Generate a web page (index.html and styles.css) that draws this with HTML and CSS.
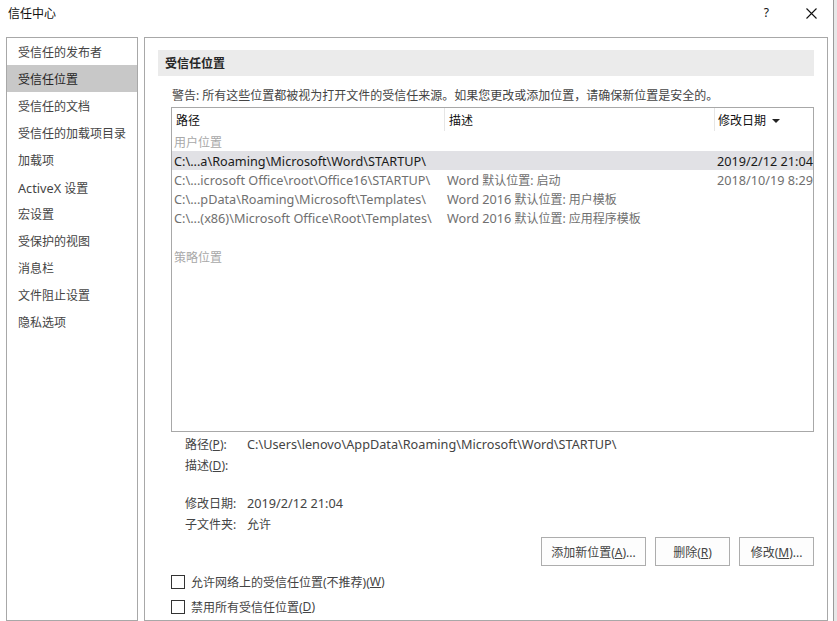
FILE: index.html
```html
<!DOCTYPE html>
<html lang="zh-CN">
  <head>
    <meta charset="UTF-8" />
    <title>信任中心</title>
    <link rel="stylesheet" href="styles.css">
  </head>
  <body>
    <div class="window">
      <header class="titlebar">
        <span class="title">信任中心</span>
        <div class="title-buttons">
          <span class="help">?</span>
          <svg class="close" width="11" height="11" viewBox="0 0 11 11">
            <path d="M0.5 0.5 L10.5 10.5 M10.5 0.5 L0.5 10.5" stroke="#111" stroke-width="1.1" fill="none" />
          </svg>
        </div>
      </header>

      <div class="content">
        <ul class="sidebar">
          <li>受信任的发布者</li>
          <li class="active">受信任位置</li>
          <li>受信任的文档</li>
          <li>受信任的加载项目录</li>
          <li>加载项</li>
          <li><span class="latin">ActiveX</span> 设置</li>
          <li>宏设置</li>
          <li>受保护的视图</li>
          <li>消息栏</li>
          <li>文件阻止设置</li>
          <li>隐私选项</li>
        </ul>

        <div class="panel">
          <div class="section-title">受信任位置</div>
          <p class="warning">警告: 所有这些位置都被视为打开文件的受信任来源。如果您更改或添加位置，请确保新位置是安全的。</p>

          <div class="table">
            <div class="table-head">
              <div class="col col-path">路径</div>
              <div class="col col-desc">描述</div>
              <div class="col col-date">修改日期 <span class="sort-arrow"></span></div>
            </div>
            <div class="group">用户位置</div>
            <div class="row selected">
              <div class="col col-path latin">C:\...a\Roaming\Microsoft\Word\STARTUP\</div>
              <div class="col col-desc"></div>
              <div class="col col-date latin">2019/2/12 21:04</div>
            </div>
            <div class="row">
              <div class="col col-path latin">C:\...icrosoft Office\root\Office16\STARTUP\</div>
              <div class="col col-desc"><span class="latin">Word</span> 默认位置: 启动</div>
              <div class="col col-date latin">2018/10/19 8:29</div>
            </div>
            <div class="row">
              <div class="col col-path latin">C:\...pData\Roaming\Microsoft\Templates\</div>
              <div class="col col-desc"><span class="latin">Word 2016</span> 默认位置: 用户模板</div>
              <div class="col col-date"></div>
            </div>
            <div class="row">
              <div class="col col-path latin">C:\...(x86)\Microsoft Office\Root\Templates\</div>
              <div class="col col-desc"><span class="latin">Word 2016</span> 默认位置: 应用程序模板</div>
              <div class="col col-date"></div>
            </div>
            <div class="row"></div>
            <div class="group">策略位置</div>
          </div>

          <div class="details">
            <div class="detail-line">
              <span class="label">路径(<u>P</u>):</span>
              <span class="value latin">C:\Users\lenovo\AppData\Roaming\Microsoft\Word\STARTUP\</span>
            </div>
            <div class="detail-line">
              <span class="label">描述(<u>D</u>):</span>
              <span class="value"></span>
            </div>
            <div class="detail-line spaced">
              <span class="label">修改日期:</span>
              <span class="value latin">2019/2/12 21:04</span>
            </div>
            <div class="detail-line">
              <span class="label">子文件夹:</span>
              <span class="value">允许</span>
            </div>
          </div>

          <div class="buttons">
            <button class="add-button">添加新位置(<u>A</u>)...</button>
            <button>删除(<u>R</u>)</button>
            <button>修改(<u>M</u>)...</button>
          </div>

          <label class="check"><span class="box"></span>允许网络上的受信任位置(不推荐)(<u>W</u>)</label>
          <label class="check"><span class="box"></span>禁用所有受信任位置(<u>D</u>)</label>
        </div>
      </div>
    </div>
    <div class="edge"></div>
  </body>
</html>
```

FILE: styles.css
```css
* {
  box-sizing: border-box;
}

body {
  margin: 0;
  width: 837px;
  height: 621px;
  overflow: hidden;
  display: flex;
  background-color: #fff;
  font-family: "Noto Sans", "Noto Sans CJK SC", sans-serif;
  font-size: 12px;
  color: #444;
}

/* latin runs are a little wider in the original ui font */
.latin {
  font-size: 12.7px;
}

.window {
  width: 833px;
  flex-shrink: 0;
  display: flex;
  flex-direction: column;
}

.edge {
  width: 4px;
  flex-shrink: 0;
  border-left: 1px solid #9a9a9a;
  background-color: #e8e8e8;
}

.titlebar {
  height: 37px;
  flex-shrink: 0;
  display: flex;
  justify-content: space-between;
  padding-left: 8px;
}

.title {
  color: #111;
  line-height: 28px;
}

.title-buttons {
  display: flex;
  align-items: flex-start;
  padding-top: 7px;
}

.help {
  color: #111;
  line-height: 12px;
  margin-right: 37px;
}

.close {
  margin-right: 16px;
  margin-top: 1px;
}

.content {
  display: flex;
  gap: 6px;
  padding-left: 6px;
  height: 600px;
}

/* left navigation list */
.sidebar {
  list-style-type: none;
  margin: 0;
  padding: 0;
  width: 132px;
  flex-shrink: 0;
  border: 1px solid #a8a8a8;
}

.sidebar li {
  height: 27px;
  line-height: 24px;
  padding: 3px 0 0 11px;
  white-space: nowrap;
}

.sidebar li.active {
  background-color: #c8c8c8;
  color: #262626;
}

/* right panel */
.panel {
  width: 684px;
  flex-shrink: 0;
  border: 1px solid #a8a8a8;
  padding: 12px 13px 0 13px;
}

.section-title {
  background-color: #ebebeb;
  height: 26px;
  line-height: 27px;
  padding-left: 7px;
  font-weight: bold;
  color: #262626;
}

.warning {
  margin: 8px 0 2px 14px;
  line-height: 23px;
  height: 21px;
  white-space: nowrap;
}

.table {
  margin-left: 13px;
  height: 325px;
  border: 1px solid #a8a8a8;
}

.table-head {
  display: flex;
  height: 23px;
  line-height: 25px;
  color: #111;
}

.table-head .col {
  border-right: 1px solid #e6e6e6;
}

.table-head .col-date {
  border-right: none;
}

.col {
  white-space: nowrap;
  overflow: hidden;
  padding-left: 4px;
}

.col-path {
  width: 273px;
}

.col-desc {
  width: 270px;
}

.col-date {
  flex: 1;
  padding-left: 3px;
}

.sort-arrow {
  display: inline-block;
  width: 0;
  height: 0;
  border-left: 4px solid transparent;
  border-right: 4px solid transparent;
  border-top: 4px solid #222;
  margin-left: 3px;
  vertical-align: 2px;
}

.group {
  height: 19px;
  line-height: 21px;
  padding-left: 2px;
  color: #a8a8a8;
  margin-top: 1px;
}

.row {
  display: flex;
  height: 19px;
  line-height: 20px;
  color: #707070;
}

.row .col-path {
  padding-left: 2px;
  width: 273px;
}

.row .col-desc {
  padding-left: 2px;
  width: 271px;
}

.row .col-date {
  padding-left: 1px;
  overflow: visible;
}

.row.selected {
  background-color: #e1e1e5;
  color: #1a1a1a;
}

/* details below the table */
.details {
  margin: 2px 0 0 27px;
}

.detail-line {
  display: flex;
  height: 21px;
  line-height: 21px;
}

.detail-line.spaced {
  margin-top: 17px;
}

.label {
  width: 62px;
}

.buttons {
  display: flex;
  justify-content: flex-end;
  gap: 9px;
  margin-top: 2px;
}

button {
  height: 29px;
  width: 75px;
  padding: 0;
  font-family: inherit;
  font-size: 12px;
  color: #444;
  background-color: #fdfdfd;
  border: 1px solid #adadad;
}

.add-button {
  width: 105px;
}

.check {
  display: flex;
  align-items: center;
  margin-left: 13px;
  height: 25px;
}

.check:first-of-type {
  margin-top: 3px;
}

.box {
  width: 14px;
  height: 14px;
  border: 1px solid #333;
  margin-right: 6px;
}
```
